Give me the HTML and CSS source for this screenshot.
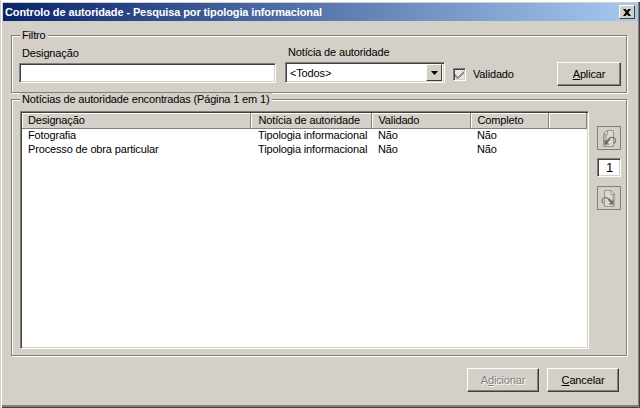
FILE: index.html
```html
<!DOCTYPE html>
<html>
	<head>
		<meta charset="UTF-8">
		<title>Controlo de autoridade</title>
		<link rel="stylesheet" href="styles.css">
	</head>
	<body>
		<div class="dialog">
			<div class="titlebar">
				<span class="title">Controlo de autoridade - Pesquisa por tipologia informacional</span>
				<span class="close">
					<svg width="8" height="7" viewBox="0 0 8 7"><path d="M0 0h2.500L4 1.800 5.500 0H8L5.300 3.500 8 7H5.500L4 5.200 2.500 7H0l2.700-3.500z" fill="#000"/></svg>
				</span>
			</div>
			<div class="group filter">
				<div class="group-title">Filtro</div>
				<div class="filter-row">
					<div class="field field-name">
						<label>Designação</label>
						<div class="sunken textbox"></div>
					</div>
					<div class="field field-type">
						<label>Notícia de autoridade</label>
						<div class="sunken combo">
							<span class="combo-value">&lt;Todos&gt;</span>
							<span class="combo-arrow"><svg width="7" height="4" viewBox="0 0 7 4"><path d="M0 0h7L3.500 4z" fill="#000"/></svg></span>
						</div>
					</div>
					<div class="check">
						<span class="checkbox"><svg width="9" height="9" viewBox="0 0 9 9"><path d="M0 4l3 3 6-6v2.500L3 9 0 6.500z" fill="#808080"/></svg></span>
						<span>Validado</span>
					</div>
					<button class="btn btn-apply"><u>A</u>plicar</button>
				</div>
			</div>
			<div class="group results">
				<div class="group-title">Notícias de autoridade encontradas (Página 1 em 1)</div>
				<div class="results-row">
					<div class="sunken list">
						<table>
							<colgroup>
								<col class="c1"><col class="c2"><col class="c3"><col class="c4"><col>
							</colgroup>
							<thead>
								<tr><th>Designação</th><th>Notícia de autoridade</th><th>Validado</th><th>Completo</th><th></th></tr>
							</thead>
							<tbody>
								<tr><td>Fotografia</td><td>Tipologia informacional</td><td>Não</td><td>Não</td><td></td></tr>
								<tr><td>Processo de obra particular</td><td>Tipologia informacional</td><td>Não</td><td>Não</td><td></td></tr>
							</tbody>
						</table>
					</div>
					<div class="pager">
						<span class="page-btn">
							<svg width="22" height="22" viewBox="0 0 22 22">
								<path d="M9 3.500h6.500v16H5.500V7z" fill="#dcdad5" stroke="#9a9892"/>
								<path d="M5.500 7.500H9.500V3.500z" fill="#f0efec" stroke="#9a9892"/>
								<path d="M6 8h3v11H6z" fill="#b4b2ac"/>
								<path d="M6.500 12.500v5h5l-2-2 3-3-1.500-1.500-3 3z" fill="#6e6c68"/>
								<path d="M11 11.500c2-2 6-1.500 6.500 1.500.2 1.200-.3 2.500-1.500 3.500" fill="none" stroke="#77756f" stroke-width="1.200"/>
							</svg>
						</span>
						<div class="sunken page-num">1</div>
						<span class="page-btn">
							<svg width="22" height="22" viewBox="0 0 22 22">
								<path d="M6.500 3.500h6.500l3.500 3.500v12.500H6.500z" fill="#dcdad5" stroke="#9a9892"/>
								<path d="M13 3.500v4h4z" fill="#f0efec" stroke="#9a9892"/>
								<path d="M14 8h2.500v11H14z" fill="#b4b2ac"/>
								<path d="M15.500 12.500v5h-5l2-2-3-3 1.500-1.500 3 3z" fill="#6e6c68"/>
								<path d="M10 11.500c-2-1.500-5.500-1-6 1.500-.3 1.200.3 2.700 1.500 3.500" fill="none" stroke="#77756f" stroke-width="1.200"/>
							</svg>
						</span>
					</div>
				</div>
			</div>
			<div class="actions">
				<button class="btn btn-off"><span>A<u>d</u>icionar</span></button>
				<button class="btn"><u>C</u>ancelar</button>
			</div>
		</div>
	</body>
</html>
```
FILE: styles.css
```css
* {
	margin: 0;
	padding: 0;
	box-sizing: border-box;
}
body {
	width: 640px;
	height: 408px;
	overflow: hidden;
	font-family: "Liberation Sans", Arial, sans-serif;
	font-size: 11px;
	letter-spacing: -0.15px;
	color: #000;
}
.dialog {
	width: 640px;
	height: 408px;
	padding: 3px 2px 3px 2px;
	background-color: #d4d0c8;
	box-shadow: inset 1px 0 0 #d4d0c8, inset 2px 0 0 #fff, inset 0 2px 0 #fff, inset -1px 0 0 #404040, inset -2px 0 0 #808080, inset 0 -1px 0 #404040, inset 0 -3px 0 #808080;
}
.titlebar {
	display: flex;
	align-items: center;
	justify-content: space-between;
	height: 18px;
	padding: 0 3px 0 2px;
	margin-left: 1px;
	background: linear-gradient(to right, #0a246a, #a6caf0);
}
.title {
	font-weight: bold;
	letter-spacing: -0.115px;
	color: #fff;
}
.close {
	display: flex;
	align-items: center;
	justify-content: center;
	width: 16px;
	height: 14px;
	background-color: #d4d0c8;
	border: 1px solid;
	border-color: #fff #404040 #404040 #fff;
}
.group {
	position: relative;
	width: 616px;
	margin-left: 9px;
	border: 1px solid #808080;
	box-shadow: 1px 1px 0 #fff, inset 1px 1px 0 #fff;
}
.group-title {
	width: fit-content;
	height: 13px;
	margin: -7px 0 0 8px;
	padding: 0 2px;
	line-height: 13px;
	background-color: #d4d0c8;
}
.filter {
	height: 58px;
	margin-top: 14px;
}
.filter-row {
	display: flex;
	align-items: flex-end;
	margin: 4px 0 0 7px;
}
.field label {
	display: block;
	height: 16px;
	line-height: 13px;
	padding-left: 3px;
}
.field-name {
	width: 257px;
}
.field-type {
	width: 160px;
	margin-left: 9px;
}
.sunken {
	border: 1px solid;
	border-color: #808080 #fff #fff #808080;
	background-color: #fff;
	box-shadow: inset 1px 1px 0 #404040, inset -1px -1px 0 #d4d0c8;
}
.textbox {
	height: 20px;
}
.combo {
	display: flex;
	align-items: center;
	justify-content: space-between;
	height: 21px;
	padding: 2px;
}
.combo-value {
	padding-left: 2px;
}
.combo-arrow {
	display: flex;
	align-items: center;
	justify-content: center;
	width: 16px;
	height: 17px;
	background-color: #d4d0c8;
	border: 1px solid;
	border-color: #fff #404040 #404040 #fff;
}
.check {
	display: flex;
	align-items: center;
	gap: 7px;
	width: 104px;
	height: 18px;
	margin-left: 8px;
}
.checkbox {
	display: flex;
	align-items: center;
	justify-content: center;
	width: 13px;
	height: 13px;
	border: 1px solid;
	border-color: #808080 #fff #fff #808080;
	background: repeating-conic-gradient(#d4d0c8 0 25%, #fff 0 50%) 0 0 / 2px 2px;
	box-shadow: inset 1px 1px 0 #404040, inset -1px -1px 0 #d4d0c8;
}
.btn {
	width: 72px;
	height: 24px;
	font-family: inherit;
	font-size: 11px;
	letter-spacing: inherit;
	color: #000;
	background-color: #d4d0c8;
	border: 1px solid;
	border-color: #fff #404040 #404040 #fff;
	box-shadow: inset -1px -1px 0 #808080;
}
.btn-apply {
	width: 64px;
	margin-bottom: -3px;
}
.btn-off {
	color: #808080;
	text-shadow: 1px 1px 0 #fff;
}
.results {
	height: 257px;
	margin-top: 6px;
}
.results-row {
	display: flex;
	margin: 5px 0 0 8px;
}
.list {
	width: 569px;
	height: 238px;
	padding: 1px 1px 0 1px;
}
table {
	width: 100%;
	table-layout: fixed;
	border-collapse: collapse;
}
.c1 {
	width: 228px;
}
.c2 {
	width: 121px;
}
.c3 {
	width: 99px;
}
.c4 {
	width: 78px;
}
th {
	height: 15px;
	padding-left: 7px;
	font-weight: normal;
	text-align: left;
	background-color: #d4d0c8;
	border-right: 1px solid #808080;
	border-bottom: 1px solid #808080;
	box-shadow: inset 1px 1px 0 #fff;
}
td {
	height: 14px;
	padding-left: 7px;
	white-space: nowrap;
	overflow: hidden;
}
th:first-child,
td:first-child {
	padding-left: 6px;
}
th:nth-child(2),
td:nth-child(2) {
	padding-left: 8px;
}
.pager {
	display: flex;
	flex-direction: column;
	margin: 15px 0 0 8px;
}
.page-btn {
	display: flex;
	align-items: center;
	justify-content: center;
	width: 24px;
	height: 24px;
	border: 1px solid #808080;
}
.page-num {
	width: 24px;
	height: 19px;
	margin: 8px 0 9px;
	padding-left: 8px;
	font-size: 13px;
	line-height: 17px;
}
.actions {
	display: flex;
	justify-content: flex-end;
	gap: 8px;
	margin: 12px 19px 0 0;
}
```
